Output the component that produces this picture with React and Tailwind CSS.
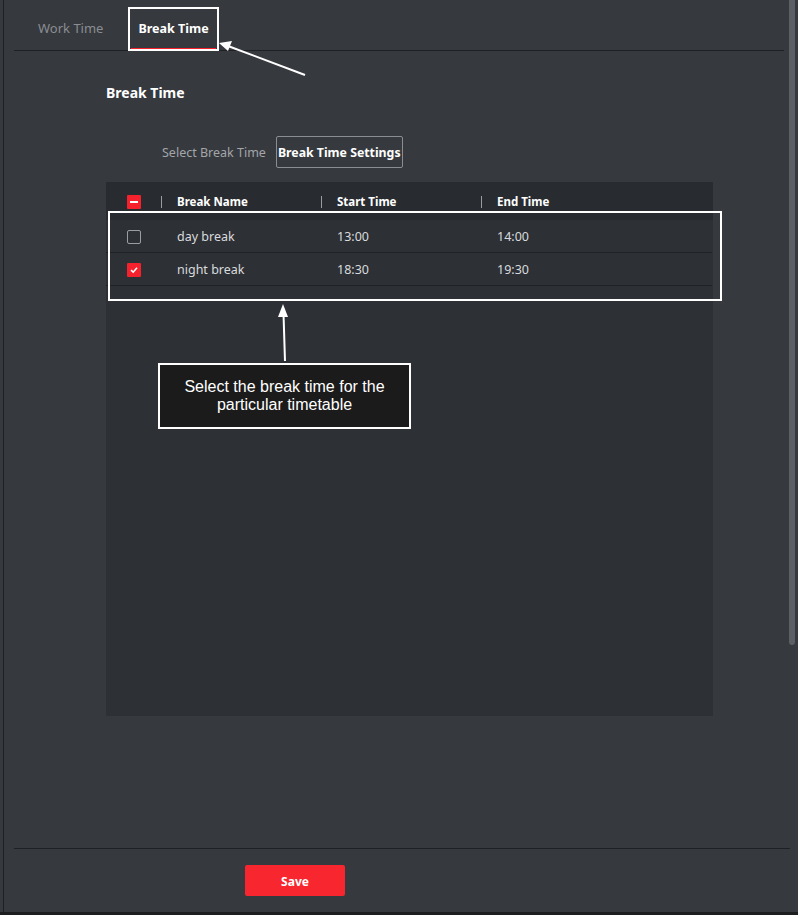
import React from "react";

const font = { fontFamily: '"Noto Sans", "Open Sans", "Noto Sans CJK SC", sans-serif' };

function Checkbox({ state }) {
  if (state === "partial") {
    return (
      <div className="w-[14px] h-[14px] bg-[#f5222d] rounded-[1px] flex items-center justify-center">
        <div className="w-[8px] h-[2px] bg-white" />
      </div>
    );
  }
  if (state === "checked") {
    return (
      <div className="w-[14px] h-[14px] bg-[#f5222d] rounded-[1px] flex items-center justify-center">
        <svg width="10" height="10" viewBox="0 0 10 10">
          <path d="M2 5.2 L4.2 7.2 L8 2.8" stroke="white" strokeWidth="1.6" fill="none" />
        </svg>
      </div>
    );
  }
  return <div className="w-[14px] h-[14px] border border-[#9a9da2] rounded-[2px]" />;
}

const rows = [
  { name: "day break", start: "13:00", end: "14:00", checked: false },
  { name: "night break", start: "18:30", end: "19:30", checked: true },
];

export default function App() {
  return (
    <div className="relative w-[798px] h-[915px] bg-[#36393e] overflow-hidden flex flex-col" style={font}>
      <div className="flex flex-1 min-h-0">
        <div className="w-[3px]" />
        <div className="w-px bg-[#1e2023]" />
        <div className="flex-1 flex flex-col">
          {/* Tabs */}
          <div className="ml-[10px] w-[770px] h-[51px] border-b border-[#1e2023] flex items-end gap-[21px] pl-[17px]">
            <div className="h-[49px] px-[7px] flex items-center text-[13px] text-[#8a8d92] pt-[6px]">Work Time</div>
            <div className="h-[49px] px-[7px] flex items-center text-[12.5px] font-bold text-white pt-[10px] border-b-2 border-[#f5222d]">Break Time</div>
          </div>

          {/* Body */}
          <div className="pl-[102px] flex flex-col">
            <div className="mt-[31px] h-[20px] flex items-center text-[14px] font-bold text-white">Break Time</div>
            <div className="mt-[34px] flex items-center pl-[56px] gap-[10px]">
              <span className="text-[12.5px] text-[#a3a6ab] pt-[3px]">Select Break Time</span>
              <div className="h-[32px] px-[1px] pt-[3px] border border-[#8a8d92] rounded-[2px] flex items-center text-[12.3px] font-bold text-white">
                Break Time Settings
              </div>
            </div>

            {/* Table */}
            <div className="mt-[14px] w-[607px] h-[534px] bg-[#2d3035] flex flex-col">
              <div className="h-[38px] pt-[1px] bg-[#282b30] flex items-center text-[11.5px] font-bold text-white">
                <div className="w-[55px] flex justify-center pl-[1px]"><Checkbox state="partial" /></div>
                <div className="w-[160px] flex items-center">
                  <div className="w-px h-[12px] bg-[#9a9da2]" />
                  <span className="ml-[15px]">Break Name</span>
                </div>
                <div className="w-[160px] flex items-center">
                  <div className="w-px h-[12px] bg-[#9a9da2]" />
                  <span className="ml-[15px]">Start Time</span>
                </div>
                <div className="w-[160px] flex items-center">
                  <div className="w-px h-[12px] bg-[#9a9da2]" />
                  <span className="ml-[15px]">End Time</span>
                </div>
              </div>
              {rows.map((r) => (
                <div key={r.name} className="h-[33px] pt-[2px] w-[606px] border-b border-[#202226] flex items-center text-[12.5px] text-[#d9dbde]">
                  <div className="w-[55px] flex justify-center pl-[1px]"><Checkbox state={r.checked ? "checked" : "none"} /></div>
                  <div className="w-[160px] pl-[16px]">{r.name}</div>
                  <div className="w-[160px] pl-[16px]">{r.start}</div>
                  <div className="w-[160px] pl-[16px]">{r.end}</div>
                </div>
              ))}
            </div>
          </div>

          <div className="flex-1" />
          {/* Footer */}
          <div className="ml-[10px] w-[776px] border-t border-[#1e2023] h-[64px] flex items-start pt-[16px]">
            <div className="ml-[231px] w-[100px] h-[31px] pt-[2px] bg-[#f7262f] rounded-[2px] flex items-center justify-center text-[12px] font-bold text-white">
              Save
            </div>
          </div>
        </div>
      </div>
      <div className="h-[3px] bg-[#1c1e20]" />

      {/* Scrollbar */}
      <div className="absolute left-[789px] top-0 w-[6px] h-[645px] bg-[#5c5f66] rounded-b-[3px]" />

      {/* Annotations */}
      <div className="absolute left-[128px] top-[7px] w-[91px] h-[44px] border-2 border-white" />
      <div className="absolute left-[108px] top-[211px] w-[614px] h-[90px] border-2 border-white" />
      <div className="absolute left-[158px] top-[363px] w-[253px] h-[66px] border-2 border-white bg-[#1b1b1b] flex items-center justify-center text-center text-[16px] leading-[18px] text-white" style={{ fontFamily: '"Liberation Sans", Arial, sans-serif' }}>
        Select the break time for the<br />particular timetable
      </div>
      <svg className="absolute left-0 top-0" width="798" height="915" viewBox="0 0 798 915">
        <line x1="305" y1="75" x2="228" y2="46" stroke="white" strokeWidth="2" />
        <polygon points="219,43 232,41 228,51" fill="white" />
        <line x1="285" y1="361" x2="283.5" y2="314" stroke="white" strokeWidth="2" />
        <polygon points="283,304 278,317 288,317" fill="white" />
      </svg>
    </div>
  );
}
